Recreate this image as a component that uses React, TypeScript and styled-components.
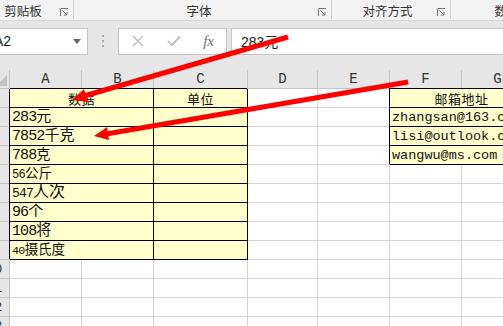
import styled, { createGlobalStyle } from 'styled-components'

const GlobalStyle = createGlobalStyle`
  html, body {
    margin: 0;
    padding: 0;
    background: #ffffff;
    overflow: hidden;
  }
  body {
    font-family: 'Noto Sans CJK SC', 'Noto Sans', sans-serif;
  }
`

const SHIFT = 20
const COLS = ['A', 'B', 'C', 'D', 'E', 'F', 'G']

type DataRow = { num: string; unit: string; numSize: number; unitSize: number }

const dataRows: DataRow[] = [
  { num: '283', unit: '元', numSize: 15, unitSize: 15 },
  { num: '7852', unit: '千克', numSize: 15, unitSize: 15 },
  { num: '788', unit: '克', numSize: 15, unitSize: 14 },
  { num: '56', unit: '公斤', numSize: 12, unitSize: 13.5 },
  { num: '547', unit: '人次', numSize: 13, unitSize: 16 },
  { num: '96', unit: '个', numSize: 15, unitSize: 15 },
  { num: '108', unit: '将', numSize: 15, unitSize: 15 },
  { num: '40', unit: '摄氏度', numSize: 11.7, unitSize: 13.5 },
]

const emails = ['zhangsan@163.com', 'lisi@outlook.com', 'wangwu@ms.com']

const LauncherIcon = () => (
  <svg width='9' height='9' viewBox='0 0 9 9'>
    <path d='M0.5 8 V0.5 H8' fill='none' stroke='#777' strokeWidth='1' />
    <path d='M2.5 2.5 L7 7 M7 3.8 V7 H3.8' fill='none' stroke='#777' strokeWidth='1' />
  </svg>
)

const Arrows = () => (
  <ArrowLayer width='503' height='326' viewBox='0 0 503 326'>
    <line x1='288' y1='37' x2='84' y2='96' stroke='#ff0000' strokeWidth='5' />
    <polygon points='72,100 88,102 84,89' fill='#ff0000' />
    <line x1='408' y1='82' x2='106' y2='134' stroke='#ff0000' strokeWidth='5' />
    <polygon points='94,136 109,140 107,127' fill='#ff0000' />
  </ArrowLayer>
)

const App = () => {
  const rows = Array.from({ length: 13 }, (_, i) => i + 1)

  return (
    <Page>
      <GlobalStyle />
      <Canvas>
        <Ribbon>
          <RibbonGroup $w={94}>
            <GroupLabel>剪贴板</GroupLabel>
            <LauncherIcon />
          </RibbonGroup>
          <RibbonGroup $w={258}>
            <GroupLabel>字体</GroupLabel>
            <LauncherIcon />
          </RibbonGroup>
          <RibbonGroup $w={119}>
            <GroupLabel>对齐方式</GroupLabel>
            <LauncherIcon />
          </RibbonGroup>
          <RibbonGroup $w={110} $last>
            <GroupLabel>数字</GroupLabel>
          </RibbonGroup>
        </Ribbon>

        <Band>
          <NameBox>
            <span>A2</span>
            <DropTriangle />
          </NameBox>
          <Grip>
            <i />
            <i />
            <i />
          </Grip>
          <FxBox>
            <svg width='12' height='12' viewBox='0 0 12 12'>
              <path d='M1 1 L11 11 M11 1 L1 11' stroke='#c2c2c2' strokeWidth='1.6' />
            </svg>
            <svg width='14' height='12' viewBox='0 0 14 12'>
              <path d='M1 6 L5 10 L13 1.5' fill='none' stroke='#c2c2c2' strokeWidth='2' />
            </svg>
            <FxLabel>fx</FxLabel>
          </FxBox>
          <FormulaInput>283元</FormulaInput>
        </Band>

        <Sheet>
          <Corner />
          {COLS.map((c) => (
            <ColHead key={c}>{c}</ColHead>
          ))}

          {rows.map((r) => {
            const data = r >= 2 && r <= 9 ? dataRows[r - 2] : null
            const hasLeftTable = r <= 9
            const hasEmail = r <= 4
            return [
              <RowHead key={`h${r}`}>{r}</RowHead>,
              hasLeftTable ? (
                <Cell key={`ab${r}`} $span={2} $yellow $center={r === 1}>
                  {r === 1 ? (
                    <HeadText>数据</HeadText>
                  ) : (
                    data && (
                      <Value>
                        <Num style={{ fontSize: data.numSize }}>{data.num}</Num>
                        <Unit style={{ fontSize: data.unitSize }}>{data.unit}</Unit>
                      </Value>
                    )
                  )}
                </Cell>
              ) : (
                [<Cell key={`a${r}`} />, <Cell key={`b${r}`} />]
              ),
              <Cell key={`c${r}`} $yellow={hasLeftTable} $center>
                {r === 1 && <HeadText>单位</HeadText>}
              </Cell>,
              <Cell key={`d${r}`} />,
              <Cell key={`e${r}`} />,
              hasEmail ? (
                <Cell key={`fg${r}`} $span={2} $yellow $center={r === 1}>
                  {r === 1 ? <HeadText>邮箱地址</HeadText> : <Mail>{emails[r - 2]}</Mail>}
                </Cell>
              ) : (
                [<Cell key={`f${r}`} />, <Cell key={`g${r}`} />]
              ),
            ]
          })}
        </Sheet>
      </Canvas>
      <Arrows />
    </Page>
  )
}

export default App

const Page = styled.div`
  position: relative;
  width: 503px;
  height: 326px;
  overflow: hidden;
  background: #ffffff;
`

const Canvas = styled.div`
  margin-left: -${SHIFT}px;
  width: 600px;
`

const Ribbon = styled.div`
  display: flex;
  height: 21px;
  box-sizing: border-box;
  background: #f3f3f3;
  border-bottom: 1px solid #d6d6d6;
`

const RibbonGroup = styled.div<{ $w: number; $last?: boolean }>`
  display: flex;
  align-items: center;
  box-sizing: border-box;
  width: ${({ $w }) => $w}px;
  flex-shrink: 0;
  height: 19px;
  padding: 2px 4px 0 0;
  border-right: ${({ $last }) => ($last ? 'none' : '1px solid #d3d3d3')};

  svg {
    margin-top: 4px;
  }
`

const GroupLabel = styled.span`
  flex: 1;
  text-align: center;
  font-size: 12.5px;
  color: #333333;
  white-space: nowrap;
  padding-left: 6px;
`

const Band = styled.div`
  display: flex;
  align-items: center;
  height: 49px;
  box-sizing: border-box;
  padding-bottom: 9px;
  background: #e6e6e6;
`

const NameBox = styled.div`
  display: flex;
  align-items: center;
  justify-content: space-between;
  box-sizing: border-box;
  width: 108px;
  height: 27px;
  padding: 0 6px 0 13px;
  background: #ffffff;
  border: 1px solid #c6c6c6;
  font-family: 'Liberation Sans', sans-serif;
  font-size: 14px;
  color: #222222;
`

const DropTriangle = styled.i`
  width: 0;
  height: 0;
  border-left: 4px solid transparent;
  border-right: 4px solid transparent;
  border-top: 5px solid #666666;
`

const Grip = styled.div`
  display: flex;
  flex-direction: column;
  align-items: center;
  gap: 3px;
  width: 30px;

  i {
    width: 2px;
    height: 2px;
    background: #a9a9a9;
  }
`

const FxBox = styled.div`
  display: flex;
  align-items: center;
  justify-content: space-between;
  box-sizing: border-box;
  width: 109px;
  height: 27px;
  padding: 0 12px 0 13px;
  background: #ffffff;
  border: 1px solid #c6c6c6;
`

const FxLabel = styled.span`
  font-family: 'Liberation Serif', serif;
  font-style: italic;
  font-size: 15px;
  color: #6e6e6e;
`

const FormulaInput = styled.div`
  flex: 1;
  display: flex;
  align-items: center;
  box-sizing: border-box;
  height: 27px;
  margin-left: 4px;
  padding-left: 9px;
  background: #ffffff;
  border: 1px solid #c6c6c6;
  font-family: 'Liberation Sans', 'Noto Sans CJK SC', sans-serif;
  font-size: 14px;
  color: #222222;
`

const Sheet = styled.div`
  display: grid;
  grid-template-columns: 30px 72px 72px 94px 70px 72px 72px 72px;
  grid-auto-rows: 19px;
`

const Corner = styled.div`
  position: relative;
  box-sizing: border-box;
  background: #e6e6e6;
  border-right: 1px solid #c4c4c4;
  border-bottom: 1px solid #c4c4c4;

  &::after {
    content: '';
    position: absolute;
    right: 2px;
    bottom: 2px;
    border-left: 11px solid transparent;
    border-bottom: 11px solid #c2c2c2;
  }
`

const ColHead = styled.div`
  display: flex;
  align-items: center;
  justify-content: center;
  box-sizing: border-box;
  background: #e6e6e6;
  border-right: 1px solid #c4c4c4;
  border-bottom: 1px solid #c4c4c4;
  font-family: 'Liberation Mono', monospace;
  font-size: 14px;
  color: #333333;
`

const RowHead = styled.div`
  display: flex;
  align-items: center;
  justify-content: center;
  box-sizing: border-box;
  background: #e6e6e6;
  border-right: 1px solid #c4c4c4;
  border-bottom: 1px solid #c4c4c4;
  font-family: 'Liberation Mono', monospace;
  font-size: 13px;
  color: #333333;
`

const Cell = styled.div<{ $span?: number; $yellow?: boolean; $center?: boolean }>`
  grid-column: span ${({ $span }) => $span || 1};
  display: flex;
  align-items: flex-end;
  justify-content: ${({ $center }) => ($center ? 'center' : 'flex-start')};
  box-sizing: border-box;
  padding: 0 2px 0;
  overflow: hidden;
  white-space: nowrap;
  background: ${({ $yellow }) => ($yellow ? '#ffffcc' : '#ffffff')};
  border-right: 1px solid ${({ $yellow }) => ($yellow ? '#000000' : '#d5d5d5')};
  border-bottom: 1px solid ${({ $yellow }) => ($yellow ? '#000000' : '#d5d5d5')};
  ${({ $yellow }) => $yellow && 'box-shadow: -1px -1px 0 0 #000000;'}
  color: #111111;
  line-height: 17px;
`

const HeadText = styled.span`
  font-size: 13px;
  letter-spacing: 0.5px;
`

const Value = styled.span`
  line-height: 16px;
`

const Num = styled.span`
  font-family: 'Liberation Mono', monospace;
  letter-spacing: -0.06em;
`

const Unit = styled.span`
  font-family: 'Noto Sans CJK SC', sans-serif;
`

const Mail = styled.span`
  font-family: 'Liberation Mono', monospace;
  font-size: 13.5px;
`

const ArrowLayer = styled.svg`
  position: absolute;
  left: 0;
  top: 0;
  pointer-events: none;
`
